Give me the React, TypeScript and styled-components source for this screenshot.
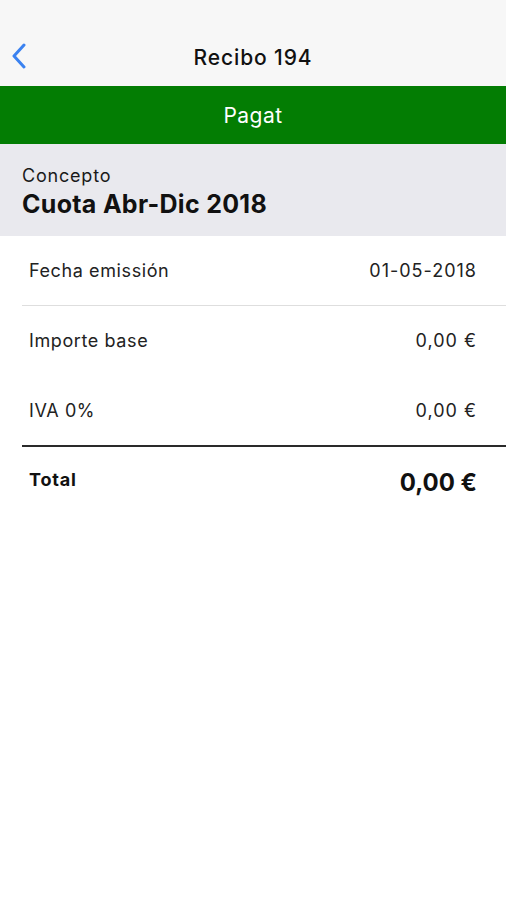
import styled, { createGlobalStyle } from "styled-components";

const GlobalStyle = createGlobalStyle`
  body {
    margin: 0;
    background: #ffffff;
    font-family: Inter, "Noto Sans", sans-serif;
    color: #111;
  }
`;

type Line = { label: string; value: string };

const lines: Line[] = [
  { label: "Fecha emissión", value: "01-05-2018" },
  { label: "Importe base", value: "0,00 €" },
  { label: "IVA 0%", value: "0,00 €" },
];

const App = () => {
  return (
    <Screen>
      <GlobalStyle />
      <NavBar>
        <BackButton aria-label="Back">
          <svg width="18" height="28" viewBox="0 0 18 28">
            <path
              d="M14 2 L4 13 L14 24"
              fill="none"
              stroke="#3b82f0"
              strokeWidth="3"
              strokeLinecap="round"
              strokeLinejoin="round"
            />
          </svg>
        </BackButton>
        <NavTitle>Recibo 194</NavTitle>
        <span />
      </NavBar>

      <StatusBanner>Pagat</StatusBanner>

      <ConceptBox>
        <ConceptLabel>Concepto</ConceptLabel>
        <ConceptValue>Cuota Abr-Dic 2018</ConceptValue>
      </ConceptBox>

      <DetailList>
        {lines.map((l, i) => (
          <Row key={l.label} $divider={i === 0 ? "light" : i === lines.length - 1 ? "dark" : "none"}>
            <Label>{l.label}</Label>
            <Value>{l.value}</Value>
          </Row>
        ))}
        <TotalRow>
          <TotalLabel>Total</TotalLabel>
          <TotalValue>0,00 €</TotalValue>
        </TotalRow>
      </DetailList>
    </Screen>
  );
};

export default App;

const Screen = styled.div`
  width: 506px;
  min-height: 900px;
  background: #ffffff;
`;

const NavBar = styled.header`
  height: 86px;
  box-sizing: border-box;
  padding-top: 28px;
  background: #f7f7f7;
  display: grid;
  grid-template-columns: 60px 1fr 60px;
  align-items: center;
`;

const BackButton = styled.button`
  border: none;
  background: none;
  padding: 0 0 0 10px;
  height: 30px;
  display: flex;
  align-items: center;
`;

const NavTitle = styled.h1`
  margin: 0;
  text-align: center;
  font-size: 21px;
  font-weight: 500;
  letter-spacing: 0.9px;
  color: #111;
`;

const StatusBanner = styled.div`
  height: 58px;
  background: #037d03;
  color: #ffffff;
  font-size: 21px;
  letter-spacing: 0.5px;
  display: flex;
  align-items: center;
  justify-content: center;
`;

const ConceptBox = styled.section`
  height: 92px;
  box-sizing: border-box;
  padding: 20px 22px 0;
  background: #e9e9ee;
`;

const ConceptLabel = styled.div`
  font-size: 18px;
  letter-spacing: 0.8px;
  color: #1a1a1a;
  line-height: 24px;
`;

const ConceptValue = styled.div`
  font-size: 25px;
  font-weight: 700;
  letter-spacing: 0.3px;
  color: #111;
  line-height: 30px;
  margin-top: 1px;
`;

const DetailList = styled.div`
  padding-left: 22px;
`;

const Row = styled.div<{ $divider: "light" | "dark" | "none" }>`
  height: 69px;
  padding: 0 29px 0 7px;
  display: flex;
  align-items: center;
  justify-content: space-between;
  border-bottom: ${(p) =>
    p.$divider === "light"
      ? "1px solid #dedede"
      : p.$divider === "dark"
      ? "2px solid #2a2a2a"
      : "1px solid transparent"};
  margin-bottom: ${(p) => (p.$divider === "dark" ? "-1px" : "0")};
`;

const Label = styled.span`
  font-size: 18px;
  letter-spacing: 0.6px;
  color: #222;
`;

const Value = styled.span`
  font-size: 18px;
  letter-spacing: 1px;
  color: #222;
`;

const TotalRow = styled.div`
  height: 72px;
  padding: 0 29px 0 7px;
  display: flex;
  align-items: center;
  justify-content: space-between;
`;

const TotalLabel = styled.span`
  font-size: 18px;
  font-weight: 700;
  letter-spacing: 0.8px;
  color: #111;
  margin-top: -6px;
`;

const TotalValue = styled.span`
  font-size: 24px;
  font-weight: 700;
  color: #111;
`;
